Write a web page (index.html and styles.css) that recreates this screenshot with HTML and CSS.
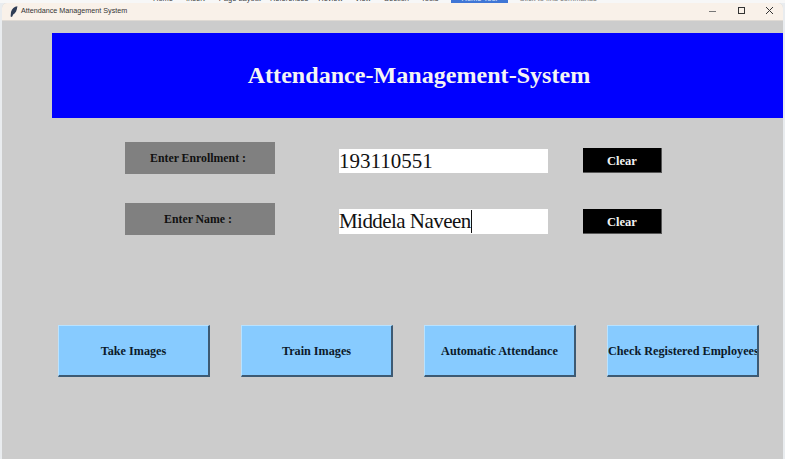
FILE: index.html
```html
<!DOCTYPE html>
<html lang="en">
<head>
<meta charset="utf-8">
<title>Attendance Management System</title>
<link rel="stylesheet" href="styles.css">
</head>
<body>
<div class="ribbon">
  <span class="rb rb-home">Home</span><span class="rb rb-insert">Insert</span><span class="rb rb-layout">Page Layout</span><span class="rb rb-ref">References</span><span class="rb rb-review">Review</span><span class="rb rb-view">View</span><span class="rb rb-section">Section</span><span class="rb rb-tools">Tools</span><span class="rb rb-hl">Home Tool</span><span class="rb rb-find">Click to find commands</span>
</div>
<div class="window">
  <header class="titlebar">
    <svg class="feather" width="8" height="11" viewBox="0 0 8 11"><path d="M7.4 .2C4.4 .6 1.8 2.6 1 6L.6 10.6 2 10.9 3.2 8.6C5.6 7.4 7.1 4 7.4 .2Z" fill="#2f3d55"/></svg>
    <span class="title">Attendance Management System</span>
    <div class="controls">
      <svg width="10" height="10" viewBox="0 0 10 10"><path d="M0 5.5H7" stroke="#777" stroke-width="1"/></svg>
      <svg width="10" height="10" viewBox="0 0 10 10"><rect x="1.5" y="1.5" width="6" height="6" fill="none" stroke="#333" stroke-width="1"/></svg>
      <svg width="10" height="10" viewBox="0 0 10 10"><path d="M1 1L8 8M8 1L1 8" stroke="#333" stroke-width="1"/></svg>
    </div>
  </header>
  <main class="content">
    <h1 class="banner">Attendance-Management-System</h1>
    <section class="form">
      <div class="label">Enter Enrollment :</div>
      <div class="entry entry-a">193110551</div>
      <button class="clear">Clear</button>
      <div class="label">Enter Name :</div>
      <div class="entry entry-b">Middela Naveen<span class="caret"></span></div>
      <button class="clear">Clear</button>
    </section>
    <section class="actions">
      <button class="action">Take Images</button>
      <button class="action">Train Images</button>
      <button class="action">Automatic Attendance</button>
      <button class="action">Check Registered Employees</button>
    </section>
  </main>
</div>
</body>
</html>
```
FILE: styles.css
```css
html, body {
  margin: 0;
  padding: 0;
  width: 785px;
  height: 459px;
  overflow: hidden;
  background: #e9ecef;
}
.ribbon {
  height: 3px;
  overflow: hidden;
  display: flex;
  font: 7.5px/9px "Liberation Sans", sans-serif;
  color: #444;
  background: #f7f7f7;
}
.rb { display: block; margin-top: -6px; white-space: nowrap; }
.rb-home { margin-left: 153px; }
.rb-insert { margin-left: 13px; }
.rb-layout { margin-left: 14px; }
.rb-ref { margin-left: 9px; }
.rb-review { margin-left: 10px; }
.rb-view { margin-left: 12px; }
.rb-section { margin-left: 13px; }
.rb-tools { margin-left: 12px; }
.rb-hl { margin-left: 12px; background: #3f76d6; color: #dfe9fb; padding: 0 11px; }
.rb-find { margin-left: 11px; color: #777; }
.window {
  margin-left: 2px;
  margin-right: 2px;
  height: 456px;
  background: #cccccc;
  border-radius: 5px 5px 0 0;
  overflow: hidden;
}
.titlebar {
  height: 16px;
  padding: 0 0 1px 8px;
  display: flex;
  align-items: center;
  background: #f9f1e9;
  border-bottom: 1px solid #dfdad4;
}
.feather { margin-right: 3px; }
.title {
  font: 7.2px/12px "Liberation Sans", sans-serif;
  color: #333;
  white-space: nowrap;
}
.controls {
  margin-left: auto;
  margin-right: 8px;
  display: flex;
  gap: 18px;
}
.content { padding-top: 12px; }
.banner {
  margin: 0 0 0 50px;
  height: 85px;
  padding-left: 3px;
  background: #0000ff;
  color: #f4f4f4;
  display: flex;
  align-items: center;
  justify-content: center;
  font: bold 24.1px "Liberation Serif", serif;
  box-sizing: border-box;
}
.form {
  margin: 24px 0 0 123px;
  display: grid;
  grid-template-columns: 150px 209px 79px;
  grid-auto-rows: 32px;
  column-gap: 64px;
  row-gap: 29px;
  align-items: start;
}
.form .clear { margin-left: -29px; }
.label {
  height: 32px;
  padding-right: 4px;
  box-sizing: border-box;
  background: #808080;
  color: #111;
  font: bold 11.8px/32px "Liberation Serif", serif;
  text-align: center;
}
.entry {
  margin-top: 7px;
  height: 24px;
  background: #fff;
  color: #111;
  font: 21px/24px "Liberation Serif", serif;
  white-space: nowrap;
}
.entry-b { margin-top: 6px; height: 25px; letter-spacing: -0.55px; }
.caret {
  display: inline-block;
  width: 1px;
  height: 23px;
  background: #111;
  vertical-align: -5px;
}
.clear {
  margin-top: 6px;
  width: 79px;
  height: 25px;
  padding: 2px 0 0;
  background: #000;
  color: #f2f2f2;
  border: 0;
  border-right: 1px solid #555;
  border-bottom: 1px solid #555;
  font: bold 12.5px "Liberation Serif", serif;
}
.actions {
  margin: 90px 0 0 56px;
  display: flex;
  gap: 31px;
}
.action {
  width: 152px;
  height: 52px;
  padding: 2px 0 0;
  background: #87cbff;
  color: #0c1a2a;
  border: 0;
  border-top: 1px solid #b8e2ff;
  border-left: 1px solid #b8e2ff;
  border-right: 2px solid #3d5a73;
  border-bottom: 2px solid #3d5a73;
  font: bold 12.2px "Liberation Serif", serif;
  white-space: nowrap;
  overflow: hidden;
  box-sizing: border-box;
}
```
